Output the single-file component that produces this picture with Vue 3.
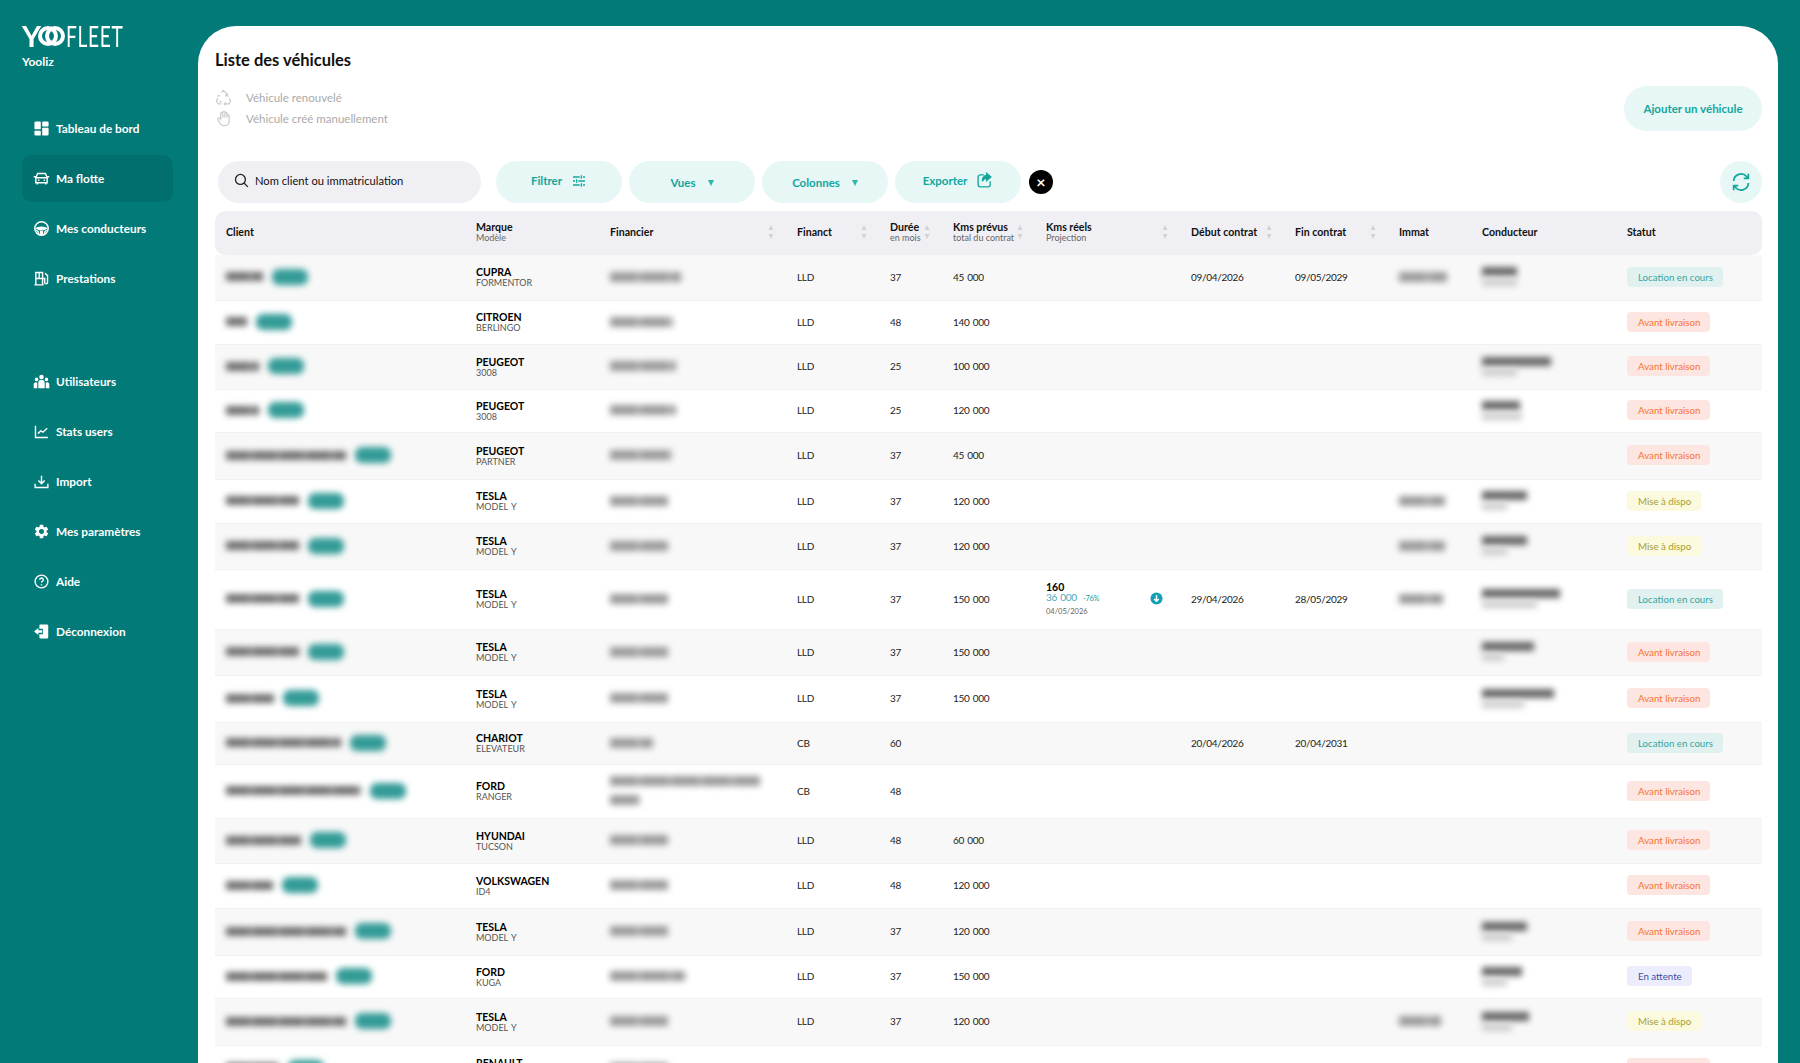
<template>
  <div class="page">
    <aside class="sidebar">
      <div class="logo">
        <span class="logo-y">Y</span>
        <svg class="logo-rings" viewBox="0 0 27 20" width="27" height="20">
          <circle cx="10" cy="10" r="8" fill="none" stroke="#fff" stroke-width="4" />
          <circle cx="17" cy="10" r="8" fill="none" stroke="#fff" stroke-width="4" />
        </svg>
        <span class="logo-fleet">FLEET</span>
      </div>
      <div class="company">Yooliz</div>

      <nav class="nav">
        <a
          v-for="item in navItems"
          :key="item.label"
          class="nav-item"
          :class="{ active: item.active, spaced: item.spaced }"
        >
          <svg class="nav-icon" viewBox="0 0 24 24" width="17" height="17">
            <circle v-if="item.ring" cx="12" cy="12" :r="item.ring" class="ico-line" />
            <path v-if="item.fill" :d="item.fill" fill="#fff" fill-rule="evenodd" />
            <path v-if="item.line" :d="item.line" class="ico-line" />
          </svg>
          <span>{{ item.label }}</span>
        </a>
      </nav>
    </aside>

    <main class="content">
      <h1 class="title">Liste des véhicules</h1>

      <div class="top-row">
        <div class="legend">
          <div class="legend-row">
            <svg viewBox="0 0 24 24" width="17" height="17" class="legend-icon">
              <path d="M9 5l3-3 3 3 2.500 4M4 13l-2 4 2.500 4H9M20 13l2 4-2 4h-5M15 19l-2 2 2 2M17 6l1 4-4-.5M7 9.500L3 10M9 19l-2-2" />
            </svg>
            <span>Véhicule renouvelé</span>
          </div>
          <div class="legend-row">
            <svg viewBox="0 0 24 24" width="17" height="17" class="legend-icon">
              <path d="M8 13V5a1.500 1.500 0 0 1 3 0v6V3.500a1.500 1.500 0 0 1 3 0V11V5a1.500 1.500 0 0 1 3 0v6-3a1.500 1.500 0 0 1 3 0v8a6 6 0 0 1-6 6h-2a6 6 0 0 1-5-3l-3-6a1.500 1.500 0 0 1 2.500-1.500z" />
            </svg>
            <span>Véhicule créé manuellement</span>
          </div>
        </div>
        <button class="btn add-btn">Ajouter un véhicule</button>
      </div>

      <div class="toolbar">
        <div class="search">
          <svg viewBox="0 0 24 24" width="17" height="17" class="search-icon">
            <circle cx="10.500" cy="10.500" r="7" />
            <path d="M15.500 15.500L21 21" />
          </svg>
          <span>Nom client ou immatriculation</span>
        </div>
        <button class="btn tool-btn">
          Filtrer
          <svg viewBox="0 0 24 24" width="16" height="16" class="btn-icon">
            <path d="M3 6h10M18 6h3M3 12h3M11 12h10M3 18h10M18 18h3M15.500 3.500v5M8.500 9.500v5M15.500 15.500v5" />
          </svg>
        </button>
        <button class="btn tool-btn low">Vues <i class="caret"></i></button>
        <button class="btn tool-btn low">Colonnes <i class="caret"></i></button>
        <button class="btn tool-btn">
          Exporter
          <svg viewBox="0 0 24 24" width="17" height="17" class="btn-icon">
            <path d="M11 4H6a3 3 0 0 0-3 3v11a3 3 0 0 0 3 3h11a3 3 0 0 0 3-3v-5" />
            <path d="M21 7l-6-5v3c-4 0-6 3-6 8 1.500-3 3.500-4 6-4v3z" fill="currentColor" />
          </svg>
        </button>
        <button class="clear-btn">×</button>
        <button class="refresh-btn">
          <svg viewBox="0 0 24 24" width="22" height="22" class="btn-icon">
            <path d="M4 11a8 8 0 0 1 14-5l2 2M20 13a8 8 0 0 1-14 5l-2-2M20 3v5h-5M4 21v-5h5" />
          </svg>
        </button>
      </div>

      <table class="vehicles">
        <colgroup>
          <col v-for="w in colWidths" :key="w.id" :style="{ width: w.px + 'px' }" />
        </colgroup>
        <thead>
          <tr>
            <th v-for="col in columns" :key="col.label">
              <div class="th-inner">
                <div>
                  <div>{{ col.label }}</div>
                  <div v-if="col.sub" class="th-sub">{{ col.sub }}</div>
                </div>
                <svg v-if="col.sort" viewBox="0 0 6 16" width="6" height="16" class="sort">
                  <path d="M3 1l2.500 5h-5z" />
                  <path d="M3 15L.5 10h5z" />
                </svg>
              </div>
            </th>
          </tr>
        </thead>
        <tbody>
          <tr v-for="(row, i) in rows" :key="i" :style="{ height: row.h + 'px' }">
            <td>
              <div class="client">
                <div class="blur name" :style="{ width: row.client + 'px' }"></div>
                <div class="blur pill"></div>
              </div>
            </td>
            <td>
              <div class="brand">{{ row.brand }}</div>
              <div class="model">{{ row.model }}</div>
            </td>
            <td>
              <div class="blur fin" :style="{ width: row.fin + 'px' }"></div>
              <div v-if="row.fin2" class="blur fin fin2" :style="{ width: row.fin2 + 'px' }"></div>
            </td>
            <td>{{ row.type }}</td>
            <td>{{ row.months }}</td>
            <td>{{ row.kms }}</td>
            <td>
              <div v-if="row.real" class="real">
                <div>
                  <div class="real-val">{{ row.real }}</div>
                  <div class="real-proj">{{ row.proj }} <small>{{ row.pct }}</small></div>
                  <div class="real-date">{{ row.realDate }}</div>
                </div>
                <svg viewBox="0 0 14 14" width="13" height="13" class="real-icon">
                  <circle cx="7" cy="7" r="6.500" fill="#12a0b8" />
                  <path d="M7 3.500v6M4.500 7.500L7 10l2.500-2.500" stroke="#fff" stroke-width="1.600" fill="none" />
                </svg>
              </div>
            </td>
            <td>{{ row.start }}</td>
            <td>{{ row.end }}</td>
            <td>
              <div v-if="row.immat" class="blur fin" :style="{ width: row.immat + 'px' }"></div>
            </td>
            <td>
              <div v-if="row.driver">
                <div class="blur driver" :style="{ width: row.driver[0] + 'px' }"></div>
                <div class="blur driver2" :style="{ width: row.driver[1] + 'px' }"></div>
              </div>
            </td>
            <td>
              <span class="status" :class="statusClass[row.status]">{{ row.status }}</span>
            </td>
          </tr>
        </tbody>
      </table>
    </main>
  </div>
</template>

<script setup>
const navItems = [
  {
    label: 'Tableau de bord',
    fill: 'M2 4a2 2 0 0 1 2-2h6a1 1 0 0 1 1 1v9a1 1 0 0 1-1 1H3a1 1 0 0 1-1-1zM13 3a1 1 0 0 1 1-1h6a2 2 0 0 1 2 2v4a1 1 0 0 1-1 1h-7a1 1 0 0 1-1-1zM13 12a1 1 0 0 1 1-1h7a1 1 0 0 1 1 1v8a2 2 0 0 1-2 2h-6a1 1 0 0 1-1-1zM2 16a1 1 0 0 1 1-1h7a1 1 0 0 1 1 1v5a1 1 0 0 1-1 1H4a2 2 0 0 1-2-2z',
  },
  {
    label: 'Ma flotte',
    active: true,
    line: 'M4 11l2.500-6h11l2.500 6M4 11h16v7H4zM1 9.500h3M20 9.500h3M6 18v2.500M18 18v2.500M7 14.500h2M15 14.500h2',
  },
  {
    label: 'Mes conducteurs',
    ring: 9.5,
    fill: 'M3 12C6 8 18 8 21 12L15.500 14.500H8.500zM10 15h4l.8 6.500H9.200zM3 13l5 2.500 1 6z M21 13l-5 2.500-1 6z',
  },
  {
    label: 'Prestations',
    line: 'M4 21V3.500h9.500V21M2 21h13M4 12h9.500M8.700 3.500V12M13.500 12h3v5.500a2 2 0 0 0 4 0V8l-3.500-3.500',
  },
  {
    label: 'Utilisateurs',
    spaced: true,
    fill: 'M12 2.500a3.200 3.200 0 1 1 0 6.400a3.200 3.200 0 0 1 0-6.400zM5 6.500a2.500 2.500 0 1 1 0 5a2.500 2.500 0 0 1 0-5zM19 6.500a2.500 2.500 0 1 1 0 5a2.500 2.500 0 0 1 0-5zM7.500 14a4.500 4.500 0 0 1 9 0v7.500h-9zM1 21.500V16a3 3 0 0 1 5-2.200v7.700zM23 21.500V16a3 3 0 0 0-5-2.200v7.700z',
  },
  { label: 'Stats users', line: 'M3.500 4v16.500H21M7 15l4-4 3 2 6-5.500' },
  { label: 'Import', line: 'M12 4v11M7.500 10.500L12 15l4.500-4.500M3 15v5.500h18V15' },
  {
    label: 'Mes paramètres',
    fill: 'M19.140 12.940c.04-.3.06-.61.06-.94 0-.32-.02-.64-.07-.94l2.030-1.580a.49.49 0 0 0 .12-.61l-1.920-3.320a.488.488 0 0 0-.59-.22l-2.390.96c-.5-.38-1.030-.7-1.620-.94l-.36-2.540a.484.484 0 0 0-.48-.41h-3.840c-.24 0-.43.17-.47.41l-.36 2.540c-.59.24-1.130.57-1.620.94l-2.390-.96c-.22-.08-.47 0-.59.22L2.740 8.870c-.12.21-.08.47.12.61l2.030 1.580c-.05.3-.09.63-.09.94s.02.64.07.94l-2.030 1.580a.49.49 0 0 0-.12.61l1.920 3.320c.12.22.37.29.59.22l2.390-.96c.5.38 1.030.7 1.620.94l.36 2.540c.05.24.24.41.48.41h3.840c.24 0 .44-.17.47-.41l.36-2.540c.59-.24 1.130-.56 1.620-.94l2.390.96c.22.08.47 0 .59-.22l1.920-3.320c.12-.22.07-.47-.12-.61l-2.010-1.580zM12 15.600c-1.980 0-3.600-1.620-3.600-3.600s1.620-3.600 3.600-3.600 3.600 1.620 3.600 3.600-1.620 3.600-3.600 3.600z',
  },
  {
    label: 'Aide',
    ring: 9,
    line: 'M9.500 9.500a2.500 2.500 0 1 1 3.600 2.300c-.8.400-1.100.9-1.100 1.700M12 16v1.500',
  },
  {
    label: 'Déconnexion',
    fill: 'M9 3.500a1.500 1.500 0 0 1 1.500-1.500H20a1.500 1.500 0 0 1 1.500 1.500v17A1.500 1.500 0 0 1 20 22h-9.500A1.500 1.500 0 0 1 9 20.500V16h5V8H9zM1.500 12l6-5v3.200H13v3.600H7.500V17z',
  },
]

const colWidths = [250, 134, 187, 93, 63, 93, 145, 104, 104, 83, 145, 146].map((px, id) => ({ id, px }))

const columns = [
  { label: 'Client' },
  { label: 'Marque', sub: 'Modèle' },
  { label: 'Financier', sort: true },
  { label: 'Financt', sort: true },
  { label: 'Durée', sub: 'en mois', sort: true },
  { label: 'Kms prévus', sub: 'total du contrat', sort: true },
  { label: 'Kms réels', sub: 'Projection', sort: true },
  { label: 'Début contrat', sort: true },
  { label: 'Fin contrat', sort: true },
  { label: 'Immat' },
  { label: 'Conducteur' },
  { label: 'Statut' },
]

const statusClass = {
  'Location en cours': 's-rent',
  'Avant livraison': 's-before',
  'Mise à dispo': 's-ready',
  'En attente': 's-wait',
}

const AVANT = 'Avant livraison'
const LOC = 'Location en cours'
const MISE = 'Mise à dispo'

const rows = [
  { h: 46, client: 37, brand: 'CUPRA', model: 'FORMENTOR', fin: 71, type: 'LLD', months: 37, kms: '45 000', start: '09/04/2026', end: '09/05/2029', immat: 48, driver: [35, 35], status: LOC },
  { h: 44, client: 21, brand: 'CITROEN', model: 'BERLINGO', fin: 63, type: 'LLD', months: 48, kms: '140 000', status: AVANT },
  { h: 45, client: 33, brand: 'PEUGEOT', model: '3008', fin: 66, type: 'LLD', months: 25, kms: '100 000', driver: [69, 35], status: AVANT },
  { h: 43, client: 33, brand: 'PEUGEOT', model: '3008', fin: 66, type: 'LLD', months: 25, kms: '120 000', driver: [38, 40], status: AVANT },
  { h: 47, client: 120, brand: 'PEUGEOT', model: 'PARTNER', fin: 62, type: 'LLD', months: 37, kms: '45 000', status: AVANT },
  { h: 44, client: 73, brand: 'TESLA', model: 'MODEL Y', fin: 58, type: 'LLD', months: 37, kms: '120 000', immat: 46, driver: [45, 25], status: MISE },
  { h: 46, client: 73, brand: 'TESLA', model: 'MODEL Y', fin: 58, type: 'LLD', months: 37, kms: '120 000', immat: 46, driver: [45, 25], status: MISE },
  { h: 60, client: 73, brand: 'TESLA', model: 'MODEL Y', fin: 58, type: 'LLD', months: 37, kms: '150 000', real: '160', proj: '36 000', pct: '-76%', realDate: '04/05/2026', start: '29/04/2026', end: '28/05/2029', immat: 44, driver: [78, 55], status: LOC },
  { h: 46, client: 73, brand: 'TESLA', model: 'MODEL Y', fin: 58, type: 'LLD', months: 37, kms: '150 000', driver: [52, 22], status: AVANT },
  { h: 47, client: 48, brand: 'TESLA', model: 'MODEL Y', fin: 58, type: 'LLD', months: 37, kms: '150 000', driver: [72, 42], status: AVANT },
  { h: 42, client: 115, brand: 'CHARIOT', model: 'ELEVATEUR', fin: 43, type: 'CB', months: 60, start: '20/04/2026', end: '20/04/2031', status: LOC },
  { h: 54, client: 135, brand: 'FORD', model: 'RANGER', fin: 150, fin2: 30, type: 'CB', months: 48, status: AVANT },
  { h: 45, client: 75, brand: 'HYUNDAI', model: 'TUCSON', fin: 58, type: 'LLD', months: 48, kms: '60 000', status: AVANT },
  { h: 45, client: 47, brand: 'VOLKSWAGEN', model: 'ID4', fin: 58, type: 'LLD', months: 48, kms: '120 000', status: AVANT },
  { h: 47, client: 120, brand: 'TESLA', model: 'MODEL Y', fin: 58, type: 'LLD', months: 37, kms: '120 000', driver: [45, 30], status: AVANT },
  { h: 43, client: 101, brand: 'FORD', model: 'KUGA', fin: 75, type: 'LLD', months: 37, kms: '150 000', driver: [40, 25], status: 'En attente' },
  { h: 47, client: 120, brand: 'TESLA', model: 'MODEL Y', fin: 58, type: 'LLD', months: 37, kms: '120 000', immat: 42, driver: [47, 30], status: MISE },
  { h: 46, client: 53, brand: 'RENAULT', model: 'ZOE', fin: 58, type: 'LLD', months: 37, kms: '120 000', status: AVANT },
]
</script>

<style>
html,
body {
  margin: 0;
  height: 100%;
  overflow: hidden;
  background: #017a78;
}
</style>

<style scoped>
.page {
  display: flex;
  height: 1063px;
  overflow: hidden;
  background: #017a78;
  font-family: Lato, "Open Sans", sans-serif;
  color: #111;
}

.sidebar {
  width: 198px;
  flex-shrink: 0;
  padding: 24px 25px 0 22px;
  box-sizing: border-box;
  color: #fff;
}

.logo {
  display: flex;
  align-items: center;
  height: 24px;
}

.logo-y {
  width: 15px;
  font-size: 28px;
  font-weight: 700;
  line-height: 24px;
  transform: scaleX(1.05);
  transform-origin: left center;
}

.logo-rings {
  margin-left: 1px;
}

.logo-fleet {
  font-size: 29px;
  font-weight: 400;
  line-height: 24px;
  letter-spacing: 1px;
  transform: scaleX(0.66);
  transform-origin: left center;
  margin-left: 1px;
}

.company {
  margin-top: 6px;
  font-size: 12px;
  font-weight: 700;
}

.nav {
  display: flex;
  flex-direction: column;
  gap: 3px;
  margin-top: 36px;
}

.nav-item {
  display: flex;
  align-items: center;
  gap: 6px;
  height: 47px;
  padding-left: 11px;
  border-radius: 10px;
  font-size: 11.800px;
  font-weight: 700;
}

.nav-item.active {
  background: #016f6d;
}

.nav-item.spaced {
  margin-top: 53px;
}

.nav-icon {
  flex-shrink: 0;
}

.ico-line {
  fill: none;
  stroke: #fff;
  stroke-width: 2;
}

.content {
  flex: 1;
  min-width: 0;
  margin: 26px 22px 0 0;
  padding: 24px 16px 0 17px;
  background: #fff;
  border-radius: 38px 38px 0 0;
}

.title {
  margin: 0;
  font-size: 16.500px;
  line-height: 20px;
  font-weight: 700;
}

.top-row {
  display: flex;
  justify-content: space-between;
  margin-top: 16px;
  height: 45px;
}

.legend {
  padding-top: 1px;
  color: #aaa;
  font-size: 11.500px;
}

.legend-row {
  display: flex;
  align-items: center;
  gap: 14px;
  height: 21px;
}

.legend-icon {
  fill: none;
  stroke: #ccc;
  stroke-width: 1.800;
}

.btn {
  border: 0;
  background: #e6f7f6;
  color: #13a69d;
  font-family: inherit;
  font-weight: 700;
  font-size: 11.500px;
}

.add-btn {
  width: 138px;
  padding-bottom: 2px;
  border-radius: 23px;
}

.toolbar {
  display: flex;
  align-items: center;
  gap: 7px;
  height: 42px;
  margin-top: 30px;
  padding-left: 3px;
}

.search {
  display: flex;
  align-items: center;
  gap: 5px;
  width: 263px;
  height: 100%;
  margin-right: 8px;
  padding: 0 0 3px 15px;
  box-sizing: border-box;
  border-radius: 21px;
  background: #f0eff4;
  font-size: 11.200px;
}

.search-icon {
  fill: none;
  stroke: #222;
  stroke-width: 1.800;
}

.tool-btn {
  display: flex;
  align-items: center;
  justify-content: center;
  gap: 9px;
  width: 126px;
  height: 100%;
  padding-bottom: 4px;
  border-radius: 21px;
}

.tool-btn.low {
  padding: 1px 0 0;
}

.btn-icon {
  fill: none;
  stroke: currentColor;
  stroke-width: 1.900;
}

.caret {
  width: 0;
  height: 0;
  margin-left: 3px;
  border-left: 3px solid transparent;
  border-right: 3px solid transparent;
  border-top: 6px solid #2fb5ad;
}

.clear-btn {
  width: 24px;
  height: 24px;
  margin-left: 1px;
  padding: 0;
  border: 0;
  border-radius: 50%;
  background: #000;
  color: #fff;
  font-family: inherit;
  font-size: 16px;
  font-weight: 700;
  line-height: 22px;
}

.refresh-btn {
  display: flex;
  align-items: center;
  justify-content: center;
  width: 42px;
  height: 42px;
  margin-left: auto;
  padding: 0;
  border: 0;
  border-radius: 50%;
  background: #e6f7f6;
  color: #13a69d;
}

.vehicles {
  width: 1547px;
  margin-top: 8px;
  table-layout: fixed;
  border-collapse: separate;
  border-spacing: 0;
  font-size: 10px;
  letter-spacing: -0.3px;
  word-spacing: 1px;
}

.vehicles th {
  height: 44px;
  padding: 0 0 2px 11px;
  box-sizing: border-box;
  background: #f0eff4;
  text-align: left;
  font-size: 10.600px;
  font-weight: 700;
  line-height: 11px;
  letter-spacing: 0;
  word-spacing: 0;
  white-space: nowrap;
}

.vehicles th:first-child {
  border-radius: 10px 0 0 10px;
}

.vehicles th:last-child {
  border-radius: 0 10px 10px 0;
}

.th-inner {
  display: flex;
  align-items: center;
  justify-content: space-between;
  padding-right: 12px;
}

.th-sub {
  font-size: 9px;
  font-weight: 400;
  line-height: 9px;
  color: #666;
}

.sort {
  margin-left: -4px;
  fill: #d2d2d6;
  flex-shrink: 0;
}

.vehicles td {
  padding: 0 0 2px 11px;
  color: #222;
  border-bottom: 1px solid #f1f1f1;
}

.vehicles tbody tr:nth-child(odd) td {
  background: #f8f8f8;
}

.client {
  display: flex;
  align-items: center;
  gap: 9px;
}

.blur {
  filter: blur(3px);
}

.name {
  height: 9px;
  background: repeating-linear-gradient(90deg, #6f6f6f 0 23px, #8f8f8f 23px 27px);
}

.pill {
  width: 36px;
  height: 16px;
  border-radius: 7px;
  background: #339b97;
}

.brand {
  margin-top: 1px;
  font-size: 10.500px;
  font-weight: 700;
  line-height: 12px;
  letter-spacing: 0;
  color: #000;
}

.model {
  font-size: 9px;
  line-height: 10px;
  letter-spacing: 0;
  color: #555;
}

.fin {
  height: 10px;
  background: repeating-linear-gradient(90deg, #9a9a9a 0 27px, #b5b5b5 27px 31px);
}

.fin2 {
  margin-top: 9px;
}

.driver {
  height: 9px;
  background: #666;
}

.driver2 {
  height: 7px;
  margin-top: 3px;
  background: #ccc;
}

.real {
  display: flex;
  align-items: center;
  justify-content: space-between;
  padding-right: 17px;
}

.real-val {
  font-size: 10.500px;
  font-weight: 700;
  line-height: 10px;
  letter-spacing: 0;
  color: #000;
}

.real-proj {
  font-size: 10px;
  line-height: 11px;
  color: #4aa8b8;
}

.real-proj small {
  margin-left: 3px;
  font-size: 7.500px;
  color: #13a69d;
}

.real-date {
  margin-top: 3px;
  font-size: 7.500px;
  line-height: 9px;
  letter-spacing: 0;
  color: #666;
}

.real-icon {
  flex-shrink: 0;
}

.status {
  display: inline-block;
  padding: 0 10px 0 11px;
  height: 20px;
  border-radius: 4px;
  font-size: 9.700px;
  line-height: 20px;
  letter-spacing: 0;
  word-spacing: 0;
}

.s-rent {
  background: #e0f1f0;
  color: #36a5a3;
}

.s-before {
  background: #fde6e2;
  color: #f4742f;
}

.s-ready {
  background: #fbf9de;
  color: #a5a030;
}

.s-wait {
  background: #ebedfc;
  color: #3a4f9f;
}
</style>
